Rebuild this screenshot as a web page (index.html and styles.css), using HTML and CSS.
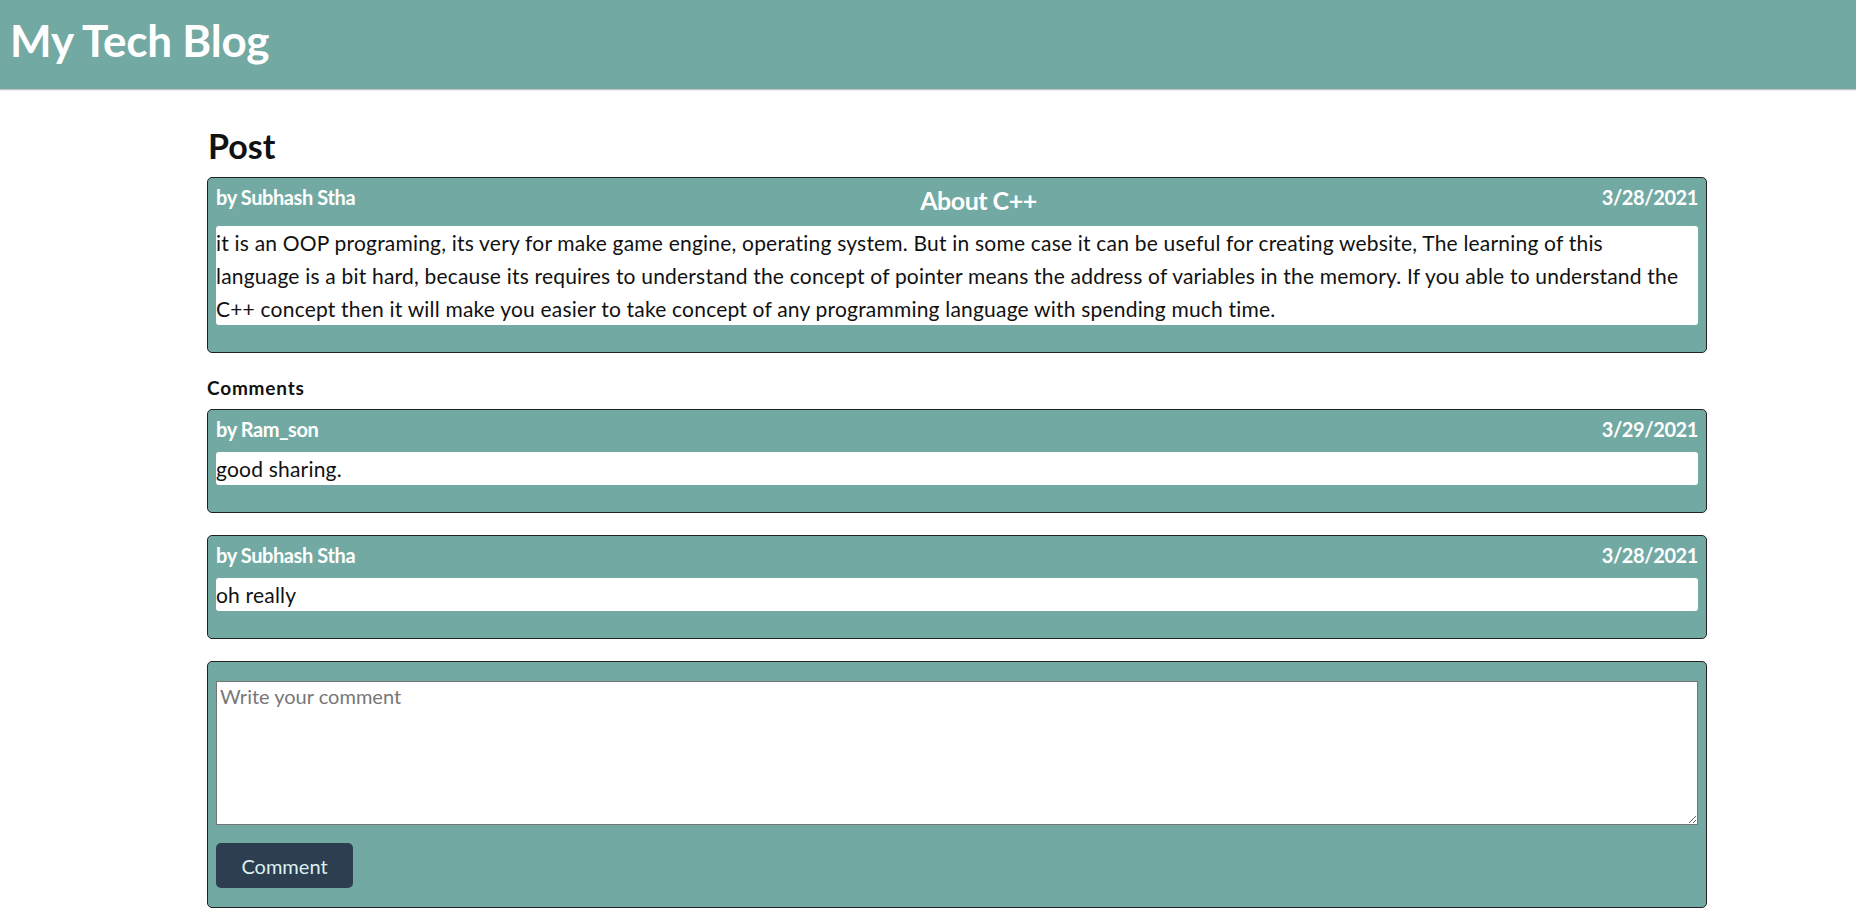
FILE: index.html
```html
<!DOCTYPE html>
<html lang="en">
<head>
<meta charset="utf-8">
<title>My Tech Blog</title>
<link rel="stylesheet" href="styles.css">
</head>
<body>
<header class="site-header">
  <h1 class="site-title">My Tech Blog</h1>
</header>
<main class="main">
  <h2 class="page-title">Post</h2>
  <article class="card">
    <div class="card-head">
      <span class="author">by Subhash Stha</span>
      <h3 class="post-title">About C++</h3>
      <span class="date">3/28/2021</span>
    </div>
    <p class="card-body">it is an OOP programing, its very for make game engine, operating system. But in some case it can be useful for creating website, The learning of this<br>language is a bit hard, because its requires to understand the concept of pointer means the address of variables in the memory. If you able to understand the<br>C++ concept then it will make you easier to take concept of any programming language with spending much time.</p>
  </article>

  <h4 class="comments-title">Comments</h4>
  <div class="comment-list">
    <article class="card">
      <div class="card-head">
        <span class="author">by Ram_son</span>
        <span class="date">3/29/2021</span>
      </div>
      <p class="card-body">good sharing.</p>
    </article>
    <article class="card">
      <div class="card-head">
        <span class="author">by Subhash Stha</span>
        <span class="date">3/28/2021</span>
      </div>
      <p class="card-body">oh really</p>
    </article>
    <form class="card comment-form">
      <textarea class="comment-input" placeholder="Write your comment"></textarea>
      <button type="button" class="comment-btn">Comment</button>
    </form>
  </div>
</main>
</body>
</html>
```
FILE: styles.css
```css
* { box-sizing: border-box; }

body {
  margin: 0;
  font-family: Lato, "Open Sans", sans-serif;
  color: #111;
  background: #fff;
}

.site-header {
  height: 89px;
  background: #73a9a3;
  padding: 14px 10px 0 10px;
  box-shadow: 0 1px 1px rgba(0,0,0,0.25);
}

.site-title {
  margin: 0;
  font-size: 44px;
  font-weight: 700;
  color: #fff;
  line-height: normal;
  letter-spacing: -0.2px;
}

.main {
  width: 1500px;
  margin-left: 207px;
  padding-top: 36px;
}

.page-title {
  margin: 0 0 11px 1px;
  font-size: 34px;
  font-weight: 700;
  line-height: normal;
}

.card {
  background: #73a9a3;
  border: 1px solid #222;
  border-radius: 5px;
  padding: 7px 8px 8px 8px;
}

.card-head {
  display: flex;
  justify-content: space-between;
  align-items: flex-start;
  color: #fff;
  font-weight: 700;
  font-size: 20px;
  letter-spacing: -0.4px;
  margin-bottom: 11px;
  line-height: normal;
}

.post-title {
  margin: 0;
  font-size: 25px;
  font-weight: 700;
  line-height: normal;
  letter-spacing: -0.5px;
}

.card-body {
  margin: 0 0 19px 0;
  background: #fff;
  border-radius: 3px;
  font-size: 21px;
  letter-spacing: 0.2px;
  line-height: 33px;
  color: #111;
  white-space: nowrap;
  overflow: hidden;
}

.comments-title {
  margin: 23px 0 10px 0;
  font-size: 19px;
  font-weight: 700;
  letter-spacing: 0.8px;
  line-height: normal;
}

.comment-list {
  display: flex;
  flex-direction: column;
  gap: 22px;
}

.comment-form {
  display: flex;
  flex-direction: column;
  align-items: flex-start;
  padding: 19px 8px 19px 8px;
  gap: 18px;
}

.comment-input {
  width: 100%;
  height: 144px;
  border: 1px solid #767676;
  border-radius: 0;
  padding: 2px 3px;
  font-family: Lato, "Open Sans", sans-serif;
  font-size: 20px;
  color: #111;
  background: #fff;
  margin: 0;
}

.comment-input::placeholder {
  color: #777;
}

.comment-btn {
  height: 45px;
  width: 137px;
  border: none;
  border-radius: 5px;
  background: #2c3e50;
  color: #dcf0f0;
  font-family: Lato, "Open Sans", sans-serif;
  font-size: 20px;
  cursor: pointer;
}
```
